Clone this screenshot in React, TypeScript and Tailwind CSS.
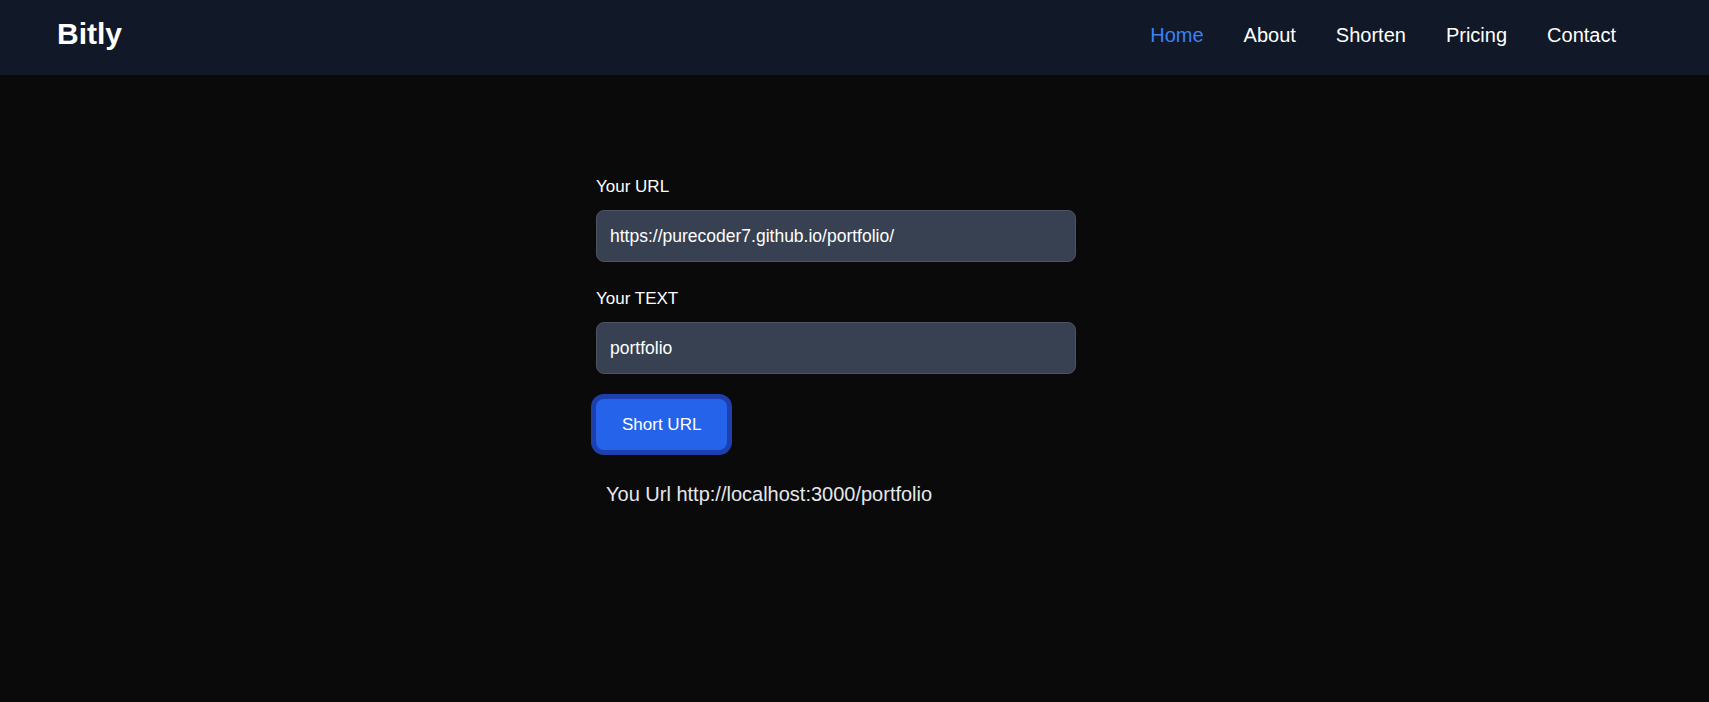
import React from "react";

const links = ["Home", "About", "Shorten", "Pricing", "Contact"];

const Navbar = () => {
  return (
    <header className="flex h-[75px] items-start justify-between bg-[#111827] pl-[57px] pr-[93px]">
      <h1 className="mt-[19px] text-[30px] font-bold leading-none text-white">Bitly</h1>
      <nav className="mt-[25px] flex gap-10 text-xl leading-none">
        {links.map((link, i) => (
          <a key={link} href="#" className={i === 0 ? "text-[#3b82f6]" : "text-white"}>
            {link}
          </a>
        ))}
      </nav>
    </header>
  );
};

const Field = ({ label, value }: { label: string; value: string }) => (
  <div className="flex flex-col">
    <label className="text-[17px] leading-6 text-white">{label}</label>
    <input
      readOnly
      value={value}
      className="mt-[11px] h-[52px] w-[480px] rounded-lg border border-[#4b5563] bg-[#374151] pl-[13px] text-[17.5px] text-white outline-none"
    />
  </div>
);

export default function App() {
  return (
    <div
      className="min-h-[702px] bg-[#0a0a0a]"
      style={{ fontFamily: '"Liberation Sans", Arial, sans-serif' }}
    >
      <Navbar />
      <main className="flex justify-center pr-[37px] pt-[100px]">
        <div className="flex w-[480px] flex-col">
          <Field label="Your URL" value="https://purecoder7.github.io/portfolio/" />
          <div className="mt-[25px]">
            <Field label="Your TEXT" value="portfolio" />
          </div>
          <div className="mt-[25px]">
            <button className="h-[51px] rounded-lg bg-[#2563eb] px-[26px] text-[17px] text-white ring-[5px] ring-[#1e40af]">
              Short URL
            </button>
          </div>
          <p className="mt-[30px] pl-[10px] text-xl leading-7 text-[#e5e7eb]">
            You Url http://localhost:3000/portfolio
          </p>
        </div>
      </main>
    </div>
  );
}
